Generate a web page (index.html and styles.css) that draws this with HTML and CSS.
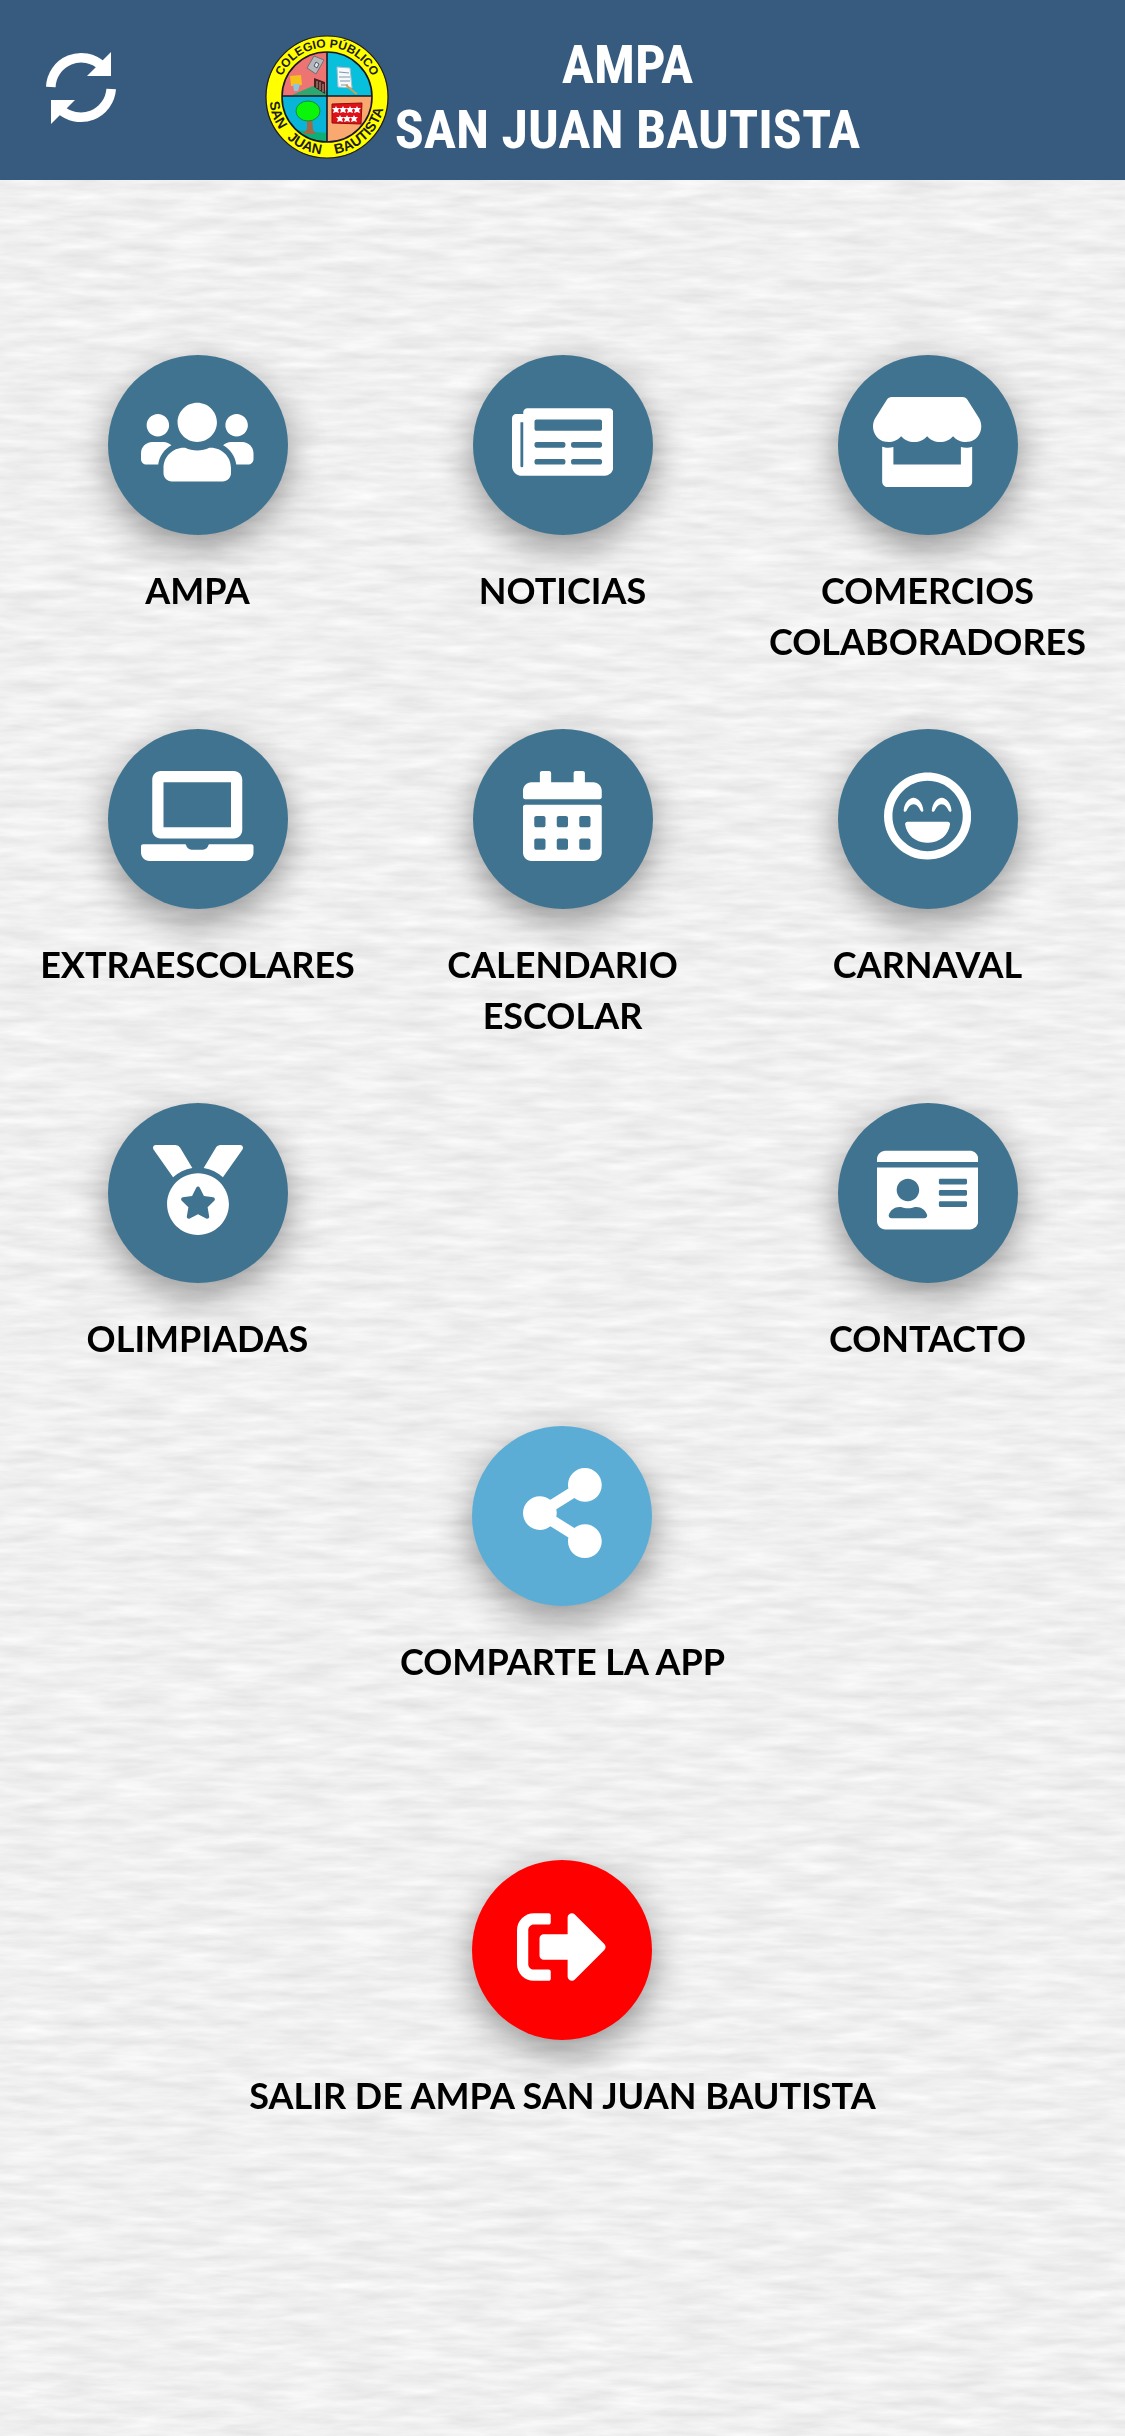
FILE: index.html
```
<!DOCTYPE html>
<html lang="es">
<head>
    <meta charset="UTF-8">
    <meta name="viewport" content="width=device-width, initial-scale=1">
    <title>AMPA San Juan Bautista</title>
    <link rel="stylesheet" href="styles.css">
</head>
<body>
    <!-- paper texture -->
    <svg class="paper" aria-hidden="true">
        <filter id="paper" x="0" y="0" width="100%" height="100%" color-interpolation-filters="sRGB">
            <feTurbulence type="fractalNoise" baseFrequency="0.018 0.11" numOctaves="4" seed="7"/>
            <feColorMatrix values="0.12 0 0 0 0.88  0.12 0 0 0 0.88  0.12 0 0 0 0.88  0 0 0 0 1"/>
        </filter>
        <rect width="100%" height="100%" filter="url(#paper)"/>
    </svg>

    <header class="header">
        <button class="refresh" type="button" aria-label="Actualizar">
            <svg viewBox="0 0 70 73">
                <path d="M4.800 36A30.400 30.400 0 0 1 56 15M65.200 38A30.400 30.400 0 0 1 14 58" fill="none" stroke="#fff" stroke-width="9.600"/>
                <path d="M65 1v24H41zM5 49h24L5 73z"/>
            </svg>
        </button>
        <div class="brand">
            <svg class="logo" viewBox="0 0 124 124" aria-hidden="true">
                <defs>
                    <path id="arc-top" d="M12.500 62A49.500 49.500 0 0 1 111.500 62"/>
                    <path id="arc-bottom" d="M4.500 62A57.500 57.500 0 0 0 119.500 62"/>
                    <clipPath id="disc"><circle cx="62" cy="62" r="45"/></clipPath>
                </defs>
                <circle cx="62" cy="62" r="61" fill="#ff0" stroke="#221a10" stroke-width="1.200"/>
                <g clip-path="url(#disc)">
                    <path d="M17 17h45v44H17z" fill="#ee7474"/>
                    <path d="M62 17h45v44H62z" fill="#08c0dc"/>
                    <path d="M17 61h45v46H17z" fill="#08b4d8"/>
                    <path d="M62 61h45v46H62z" fill="#f9a970"/>
                    <path d="M49 21l10 4-8 14-9-6z" fill="#b4b8bc" stroke="#6b7075"/>
                    <path d="M51 27l3 2-2 4-3-2z" fill="#e4e8ec" stroke="#556"/>
                    <path d="M25 41l11-1 1 10-11 1z" fill="#f4c21a"/>
                    <path d="M28 49h7l-2 7h-4z" fill="#8bc6df"/>
                    <path d="M27 60l21-9 14 5v5z" fill="#2da870"/>
                    <path d="M49 43l11 4v12l-11-7z" fill="#4b2020"/>
                    <path d="M52 46v7m3-6v8m3-6v8" stroke="#c89c8c"/>
                    <path d="M72 32l13 1 2 20-14-1z" fill="#f6f9fb" stroke="#a9bcc8"/>
                    <path d="M74 37l10 1m-10 4h11m-10 4h10m-9 4h7" stroke="#7d97aa" fill="none"/>
                    <path d="M81 50l8 7 3 2" fill="none" stroke="#c9a255" stroke-width="2"/>
                    <path d="M17 107V94l45 4v9z" fill="#0fae76"/>
                    <path d="M42 82h5l1 13 3 4H38l4-5z" fill="#a06a45"/>
                    <ellipse cx="43" cy="76" rx="12" ry="10" fill="#0bf50b" stroke="#158c35"/>
                    <path d="M67 69l30-1-1 21-29-1z" fill="#e01018" stroke="#8c1010"/>
                    <g fill="#fff">
                        <path id="star" d="M71 71l1 2 3 0-2 2 1 3-3-1-3 1 1-3-2-2 3 0z"/>
                        <use href="#star" x="7"/><use href="#star" x="14"/><use href="#star" x="21"/>
                        <use href="#star" x="4" y="9"/><use href="#star" x="11" y="9"/><use href="#star" x="18" y="9"/>
                    </g>
                </g>
                <path d="M17 61h90M62 17v90" stroke="#1b1720" stroke-width="1.600"/>
                <circle cx="62" cy="62" r="45" fill="none" stroke="#1b1720" stroke-width="1.600"/>
                <text class="ring"><textPath href="#arc-top" startOffset="50%">COLEGIO PÚBLICO</textPath></text>
                <text class="ring ring-big"><textPath href="#arc-bottom" startOffset="11%">SAN</textPath></text>
                <text class="ring ring-big"><textPath href="#arc-bottom" startOffset="36%">JUAN</textPath></text>
                <text class="ring ring-big"><textPath href="#arc-bottom" startOffset="74%">BAUTISTA</textPath></text>
            </svg>
            <h1 class="title">AMPA<br>SAN JUAN BAUTISTA</h1>
        </div>
    </header>

    <main class="menu">
        <nav class="grid">
            <a class="item" href="#ampa">
                <span class="circle"><svg viewBox="0 0 640 512"><path d="M96 224c35.300 0 64-28.700 64-64s-28.700-64-64-64-64 28.700-64 64 28.700 64 64 64zm448 0c35.300 0 64-28.700 64-64s-28.700-64-64-64-64 28.700-64 64 28.700 64 64 64zm32 32h-64c-17.600 0-33.500 7.100-45.100 18.600 40.300 22.100 68.900 62 75.100 109.400h66c17.700 0 32-14.300 32-32v-32c0-35.300-28.700-64-64-64zm-256 0c61.900 0 112-50.100 112-112S381.900 32 320 32 208 82.100 208 144s50.100 112 112 112zm76.800 32h-8.300c-20.800 10-43.900 16-68.500 16s-47.600-6-68.500-16h-8.300C179.600 288 128 339.600 128 403.200V432c0 26.500 21.500 48 48 48h288c26.500 0 48-21.500 48-48v-28.800c0-63.600-51.600-115.200-115.200-115.200zm-223.700-13.400C161.500 263.100 145.600 256 128 256H64c-35.300 0-64 28.700-64 64v32c0 17.700 14.300 32 32 32h65.900c6.300-47.400 34.900-87.300 75.200-109.400z"/></svg></span>
                <span class="label">AMPA</span>
            </a>
            <a class="item" href="#noticias">
                <span class="circle"><svg viewBox="0 0 576 512"><path d="M552 64H88c-13.300 0-24 10.700-24 24v8H24c-13.300 0-24 10.700-24 24v272c0 30.900 25.100 56 56 56h472c26.500 0 48-21.500 48-48V88c0-13.300-10.700-24-24-24zM56 400a8 8 0 0 1-8-8V144h16v248a8 8 0 0 1-8 8zm236-16H140c-6.600 0-12-5.400-12-12v-8c0-6.600 5.400-12 12-12h152c6.600 0 12 5.400 12 12v8c0 6.600-5.400 12-12 12zm208 0H348c-6.600 0-12-5.400-12-12v-8c0-6.600 5.400-12 12-12h152c6.600 0 12 5.400 12 12v8c0 6.600-5.400 12-12 12zm-208-96H140c-6.600 0-12-5.400-12-12v-8c0-6.600 5.400-12 12-12h152c6.600 0 12 5.400 12 12v8c0 6.600-5.400 12-12 12zm208 0H348c-6.600 0-12-5.400-12-12v-8c0-6.600 5.400-12 12-12h152c6.600 0 12 5.400 12 12v8c0 6.600-5.400 12-12 12zm0-96H140c-6.600 0-12-5.400-12-12v-40c0-6.600 5.400-12 12-12h360c6.600 0 12 5.400 12 12v40c0 6.600-5.400 12-12 12z"/></svg></span>
                <span class="label">NOTICIAS</span>
            </a>
            <a class="item" href="#comercios">
                <span class="circle"><svg viewBox="0 0 616 512"><path d="M602 118.600L537.100 15C531.300 5.700 521 0 510 0H106C95 0 84.700 5.700 78.900 15L14 118.600c-33.500 53.500-3.800 127.900 58.800 136.400 4.500.6 9.100.9 13.700.9 29.600 0 55.800-13 73.800-33.100 18 20.100 44.300 33.100 73.800 33.100 29.600 0 55.800-13 73.800-33.100 18 20.100 44.300 33.100 73.800 33.100 29.600 0 55.800-13 73.800-33.100 18.100 20.100 44.300 33.100 73.800 33.100 4.700 0 9.200-.3 13.700-.9 62.800-8.400 92.600-82.800 59-136.400zM529.500 288c-10 0-19.900-1.500-29.500-3.800V384H116v-99.800c-9.600 2.200-19.500 3.800-29.500 3.800-6 0-12.100-.4-18-1.200-5.600-.8-11.100-2.100-16.400-3.600V480c0 17.700 14.300 32 32 32h448c17.700 0 32-14.300 32-32V283.200c-5.400 1.600-10.800 2.900-16.400 3.600-6.100.8-12.100 1.200-18.200 1.200z"/></svg></span>
                <span class="label">COMERCIOS COLABORADORES</span>
            </a>
            <a class="item" href="#extraescolares">
                <span class="circle"><svg viewBox="0 0 640 512"><path d="M512 64v256H128V64h384m16-64H112C85.500 0 64 21.500 64 48v288c0 26.500 21.500 48 48 48h416c26.500 0 48-21.500 48-48V48c0-26.500-21.500-48-48-48zm100 416H389.500c-3 0-5.500 2.100-5.900 5.100C381.200 436.300 368 448 352 448h-64c-16 0-29.200-11.700-31.600-26.900-.5-2.900-3-5.100-5.900-5.100H12c-6.600 0-12 5.400-12 12v36c0 26.500 21.500 48 48 48h544c26.500 0 48-21.500 48-48v-36c0-6.600-5.400-12-12-12z"/></svg></span>
                <span class="label">EXTRAESCOLARES</span>
            </a>
            <a class="item" href="#calendario">
                <span class="circle"><svg viewBox="0 0 448 512"><path d="M436 160H12c-6.600 0-12-5.400-12-12v-36c0-26.500 21.500-48 48-48h48V12c0-6.600 5.400-12 12-12h40c6.600 0 12 5.400 12 12v52h128V12c0-6.600 5.400-12 12-12h40c6.600 0 12 5.400 12 12v52h48c26.500 0 48 21.500 48 48v36c0 6.600-5.400 12-12 12zM12 192h424c6.600 0 12 5.400 12 12v260c0 26.500-21.500 48-48 48H48c-26.500 0-48-21.500-48-48V204c0-6.600 5.400-12 12-12zm116 204c0-6.600-5.400-12-12-12H76c-6.600 0-12 5.400-12 12v40c0 6.600 5.400 12 12 12h40c6.600 0 12-5.400 12-12v-40zm0-128c0-6.600-5.400-12-12-12H76c-6.600 0-12 5.400-12 12v40c0 6.600 5.400 12 12 12h40c6.600 0 12-5.400 12-12v-40zm128 128c0-6.600-5.400-12-12-12h-40c-6.600 0-12 5.400-12 12v40c0 6.600 5.400 12 12 12h40c6.600 0 12-5.400 12-12v-40zm0-128c0-6.600-5.400-12-12-12h-40c-6.600 0-12 5.400-12 12v40c0 6.600 5.400 12 12 12h40c6.600 0 12-5.400 12-12v-40zm128 128c0-6.600-5.400-12-12-12h-40c-6.600 0-12 5.400-12 12v40c0 6.600 5.400 12 12 12h40c6.600 0 12-5.400 12-12v-40zm0-128c0-6.600-5.400-12-12-12h-40c-6.600 0-12 5.400-12 12v40c0 6.600 5.400 12 12 12h40c6.600 0 12-5.400 12-12v-40z"/></svg></span>
                <span class="label">CALENDARIO ESCOLAR</span>
            </a>
            <a class="item" href="#carnaval">
                <span class="circle"><svg viewBox="0 0 496 512"><path d="M248 8C111 8 0 119 0 256s111 248 248 248 248-111 248-248S385 8 248 8zm141.400 389.400c-37.800 37.800-88 58.600-141.400 58.600s-103.600-20.800-141.400-58.600S48 309.400 48 256s20.800-103.600 58.600-141.400S194.600 56 248 56s103.600 20.800 141.400 58.600S448 202.600 448 256s-20.800 103.600-58.600 141.400zM328 152c-23.800 0-52.700 29.300-56 71.400-.7 8.600 10.800 11.900 14.900 4.500l9.500-17c7.700-13.700 19.200-21.600 31.500-21.600s23.800 7.900 31.500 21.600l9.500 17c4.100 7.400 15.600 4 14.900-4.500-3.100-42.100-32-71.400-55.800-71.400zm-201 75.900l9.500-17c7.700-13.700 19.200-21.600 31.500-21.600s23.800 7.900 31.500 21.600l9.500 17c4.100 7.400 15.600 4 14.900-4.500-3.300-42.100-32.200-71.400-56-71.400s-52.700 29.300-56 71.400c-.6 8.500 10.900 11.900 15.100 4.500zM362.400 288H133.600c-8.200 0-14.500 7-13.500 15 7.500 59.200 58.900 105 121.100 105h13.600c62.200 0 113.600-45.800 121.100-105 1-8-5.300-15-13.500-15z"/></svg></span>
                <span class="label">CARNAVAL</span>
            </a>
            <a class="item" href="#olimpiadas">
                <span class="circle"><svg viewBox="0 0 512 512"><path d="M223.750 130.750L154.620 15.540A32 32 0 0 0 127.180 0H16.030C3.080 0-4.500 14.570 2.920 25.180l111.270 158.960c29.720-27.770 67.520-46.830 109.560-53.390zM495.970 0H384.820c-11.240 0-21.660 5.900-27.440 15.540l-69.130 115.210c42.040 6.560 79.840 25.620 109.560 53.380L509.080 25.180C516.500 14.570 508.920 0 495.970 0zM256 160c-97.200 0-176 78.800-176 176s78.800 176 176 176 176-78.800 176-176-78.800-176-176-176zm92.520 157.260l-37.930 36.960 8.970 52.220c1.600 9.360-8.260 16.510-16.650 12.090L256 393.880l-46.900 24.650c-8.400 4.450-18.250-2.740-16.650-12.090l8.970-52.220-37.930-36.960c-6.820-6.640-3.050-18.230 6.350-19.590l52.430-7.640 23.430-47.520c2.110-4.280 6.190-6.390 10.280-6.390 4.110 0 8.220 2.140 10.330 6.390l23.430 47.520 52.430 7.640c9.400 1.360 13.170 12.950 6.350 19.590z"/></svg></span>
                <span class="label">OLIMPIADAS</span>
            </a>
            <a class="item last" href="#contacto">
                <span class="circle"><svg viewBox="0 0 576 512"><path d="M528 32H48C21.500 32 0 53.500 0 80v16h576V80c0-26.500-21.500-48-48-48zM0 432c0 26.500 21.500 48 48 48h480c26.500 0 48-21.500 48-48V128H0v304zm352-232c0-4.400 3.600-8 8-8h144c4.400 0 8 3.600 8 8v16c0 4.400-3.600 8-8 8H360c-4.400 0-8-3.600-8-8v-16zm0 64c0-4.400 3.600-8 8-8h144c4.400 0 8 3.600 8 8v16c0 4.400-3.600 8-8 8H360c-4.400 0-8-3.600-8-8v-16zm0 64c0-4.400 3.600-8 8-8h144c4.400 0 8 3.600 8 8v16c0 4.400-3.600 8-8 8H360c-4.400 0-8-3.600-8-8v-16zM176 192c35.300 0 64 28.700 64 64s-28.700 64-64 64-64-28.700-64-64 28.700-64 64-64zM67.100 396.200C75.500 370.500 99.600 352 128 352h8.200c12.300 5.100 25.700 8 39.800 8s27.600-2.900 39.800-8h8.200c28.400 0 52.500 18.500 60.900 44.200 3.200 9.900-5.200 19.800-15.600 19.800H82.700c-10.400 0-18.800-10-15.600-19.800z"/></svg></span>
                <span class="label">CONTACTO</span>
            </a>
        </nav>

        <button class="item" type="button">
            <span class="circle share"><svg viewBox="0 0 448 512"><path d="M352 320c-22.600 0-43.400 7.800-59.800 20.900l-102.500-64.100a96.600 96.600 0 0 0 0-41.600l102.500-64.100C308.600 184.200 329.400 192 352 192c53 0 96-43 96-96S405 0 352 0s-96 43-96 96c0 7.200.8 14.100 2.300 20.800L155.800 180.900C139.400 167.800 118.600 160 96 160c-53 0-96 43-96 96s43 96 96 96c22.600 0 43.400-7.800 59.800-20.900l102.500 64.100A96.300 96.300 0 0 0 256 416c0 53 43 96 96 96s96-43 96-96-43-96-96-96z"/></svg></span>
            <span class="label">COMPARTE LA APP</span>
        </button>

        <button class="item exit" type="button">
            <span class="circle exit-circle"><svg viewBox="0 0 512 512"><path d="M497 273L329 441c-15 15-41 4.500-41-17v-96H152c-13.300 0-24-10.700-24-24v-96c0-13.300 10.700-24 24-24h136V88c0-21.400 25.900-32 41-17l168 168c9.300 9.400 9.300 24.600 0 34zM192 436v-40c0-6.600-5.400-12-12-12H96c-17.700 0-32-14.300-32-32V160c0-17.700 14.300-32 32-32h84c6.600 0 12-5.400 12-12V76c0-6.600-5.400-12-12-12H96c-53 0-96 43-96 96v192c0 53 43 96 96 96h84c6.600 0 12-5.400 12-12z"/></svg></span>
            <span class="label">SALIR DE AMPA SAN JUAN BAUTISTA</span>
        </button>
    </main>
</body>
</html>
```
FILE: styles.css
```
:root {
    --header: #375b7f;
    --primary: #40738f;
    --share: #5badd6;
    --exit: #ff0000;
    --bg: #f0f0f0;
}

* {
    box-sizing: border-box;
}

body {
    margin: 0;
    min-height: 100vh;
    background: var(--bg);
    color: #000;
    font-family: Lato, sans-serif;
}

.paper {
    position: fixed;
    top: 0;
    left: 0;
    width: 100%;
    height: 100%;
    z-index: -1;
}

.header {
    display: grid;
    grid-template-columns: 1fr auto 1fr;
    align-items: center;
    height: 180px;
    padding: 0 46px 6px;
    background: var(--header);
}

.refresh {
    justify-self: start;
    padding: 0;
    border: 0;
    background: none;
    cursor: pointer;
}

.refresh svg {
    display: block;
    width: 70px;
    fill: #fff;
}

.brand {
    display: flex;
    align-items: center;
    gap: 6px;
    padding-top: 20px;
}

.logo {
    width: 124px;
    height: 124px;
}

.ring {
    font: bold 12px "Liberation Sans", Arial, sans-serif;
    text-anchor: middle;
    fill: #221a10;
}

.ring-big {
    font-size: 14px;
}

.title {
    margin: 0;
    color: #fff;
    font: bold 54px/65px "Roboto Condensed", "Open Sans Condensed", sans-serif;
    text-align: center;
}

.menu {
    display: flex;
    flex-direction: column;
    align-items: center;
    gap: 62px;
    padding: 175px 15px 60px;
}

.grid {
    display: grid;
    grid-template-columns: repeat(3, 1fr);
    row-gap: 62px;
    width: 100%;
}

.item {
    display: flex;
    flex-direction: column;
    align-items: center;
    gap: 30px;
    padding: 0;
    border: 0;
    background: none;
    color: inherit;
    font: bold 36px/51px Lato, sans-serif;
    text-align: center;
    text-decoration: none;
    cursor: pointer;
}

.last {
    grid-column: 3;
}

.circle {
    display: flex;
    justify-content: center;
    width: 180px;
    height: 180px;
    padding-top: 42px;
    border-radius: 50%;
    background: var(--primary);
    box-shadow: 0 12px 36px rgba(0, 0, 0, 0.4);
}

.circle svg {
    height: 90px;
    fill: #fff;
}

.share {
    background: var(--share);
}

.exit {
    margin-top: 111px;
}

.exit-circle {
    background: var(--exit);
}
```
